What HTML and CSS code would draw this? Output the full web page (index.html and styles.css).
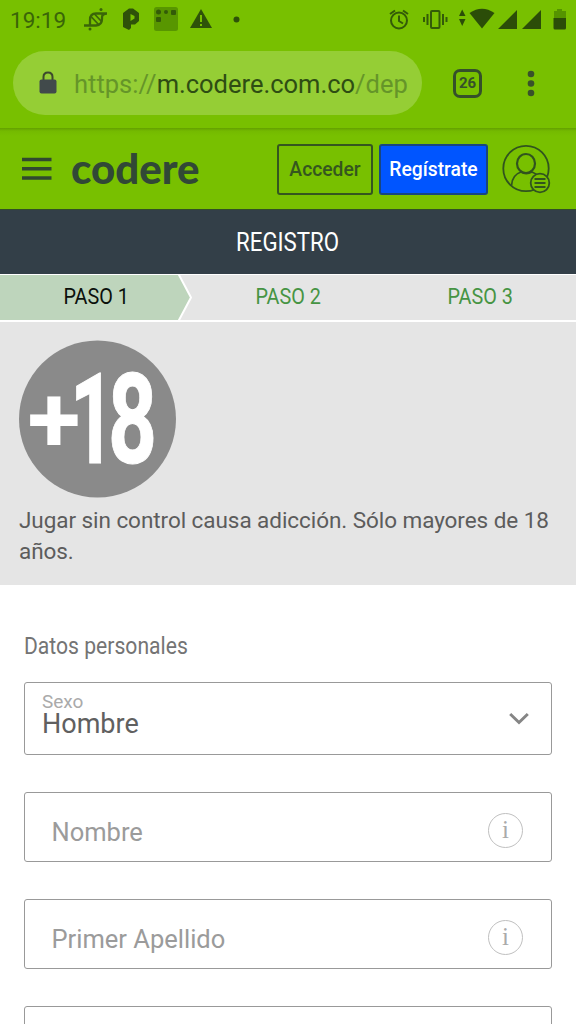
FILE: index.html
```html
<!DOCTYPE html>
<html lang="es">
<head>
<meta charset="utf-8">
<title>Registro</title>
<link rel="stylesheet" href="styles.css">
</head>
<body>
<div class="screen">
  <div class="status">
    <span class="clock">19:19</span>
    <svg class="status-left" width="164" height="40" viewBox="80 0 164 40">
      <g fill="none" stroke="#3a6508" stroke-width="2.300">
        <path d="M84 25.500H96Q102 25 102 19V17.500Q102 13.500 107 13.500M90 25V20Q90 13.500 96 13.500H107"/>
        <path d="M91.500 17L99 25M94.500 14L101.500 21.500" stroke-width="1.800"/>
      </g>
      <circle cx="101" cy="9.500" r="1.500" fill="#3a6508"/><circle cx="90" cy="29" r="1.500" fill="#3a6508"/>
      <path fill="#2e5209" fill-rule="evenodd" d="M123 13L129 8.500H133L139 13V21L135 24.500H131V28L129 30L123 27ZM130.500 14V21L134.500 18.500V16Z"/>
      <rect x="154" y="7" width="24" height="24" rx="2.500" fill="#589600"/>
      <g fill="#335b08"><circle cx="158.500" cy="12" r="2.500"/><circle cx="166" cy="12" r="2"/><rect x="171" y="10" width="5" height="5" rx="1"/><rect x="156" y="17" width="5" height="5" rx="1"/></g>
      <path fill="#2e5209" d="M201 9L212 28H190Z"/><path d="M201 15V22M201 24V26" stroke="#78c000" stroke-width="2"/>
      <circle cx="236.500" cy="19.500" r="3" fill="#2e5209"/>
    </svg>
    <svg class="status-right" width="188" height="40" viewBox="388 0 188 40">
      <g fill="none" stroke="#335b08" stroke-width="2">
        <circle cx="399" cy="20.500" r="8"/><path d="M399 15.500V21L403 23.500M390 14L395 10.500M408 14L403 10.500"/>
        <rect x="431" y="11" width="8.500" height="17" rx="1"/><path d="M427.500 14V25M424 17V22M443 14V25M446.500 17V22"/>
      </g>
      <g fill="#2b4d08">
        <path d="M459 16L462.200 9.500L465.500 16ZM459 19L462.200 26L465.500 19Z"/>
        <path d="M469.500 13Q482 4.500 494.500 13L482 28.500Z"/>
        <path d="M498 29L517 10V29ZM522 29L541 10V29Z"/>
        <path fill="#559400" d="M557 9H562V11H566V18H554V11H557Z"/><path d="M553.500 18H566V28Q566 29.500 564.500 29.500H555Q553.500 29.500 553.500 28Z"/>
      </g>
    </svg>
  </div>

  <div class="toolbar">
    <div class="address">
      <svg class="lock" width="18" height="24" viewBox="0 0 18 24"><path d="M4.500 9V6Q4.500 1.500 9 1.500T13.500 6V9" fill="none" stroke="#3d4a2d" stroke-width="2"/><rect x=".5" y="8.500" width="17" height="14" rx="2" fill="#414a4b"/></svg>
      <span class="url"><span class="dim">https://</span>m.codere.com.co<span class="dim">/dep</span></span>
    </div>
    <div class="tabs">26</div>
    <svg class="kebab" width="8" height="28" viewBox="0 0 8 28"><g fill="#39512a"><circle cx="4" cy="4" r="3.300"/><circle cx="4" cy="13.500" r="3.300"/><circle cx="4" cy="23" r="3.300"/></g></svg>
  </div>

  <header class="header">
    <svg class="menu" width="30" height="24" viewBox="0 0 30 24"><path d="M0 2.500H29.500M0 11.800H29.500M0 21H29.500" stroke="#31492f" stroke-width="3.600"/></svg>
    <svg class="logo" width="134" height="56" viewBox="0 0 134 56"><text x="1" y="39.500" textLength="128.500" lengthAdjust="spacingAndGlyphs">codere</text></svg>
    <button class="btn login">Acceder</button>
    <button class="btn signup">Regístrate</button>
    <svg class="avatar" width="50" height="50" viewBox="0 0 50 50">
      <g fill="none" stroke="#31541e" stroke-width="1.800">
        <circle cx="24" cy="24.500" r="22.700"/>
        <ellipse cx="24" cy="19.500" rx="9" ry="9.500" stroke-width="2.200"/>
        <path d="M9.500 41.500Q10 31 19 28Q24 31 30 28Q34 29.500 36.500 32.500"/>
        <circle cx="38" cy="39" r="9.300" fill="#78c000"/><path d="M32.500 35H43.500M32.500 39H43.500M32.500 43H43.500"/>
      </g>
    </svg>
  </header>

  <h1 class="title"><span class="narrow">REGISTRO</span></h1>
  <nav class="steps">
    <svg class="arrow" width="194" height="45" viewBox="0 0 194 45"><path d="M0 0H179L191 22.500L179 45H0Z" fill="#bed5bc"/><path d="M178.500 -1L191 22.500L178.500 46" fill="none" stroke="#fff" stroke-width="2"/></svg>
    <div class="step active"><span class="narrow">PASO 1</span></div>
    <div class="step"><span class="narrow">PASO 2</span></div>
    <div class="step"><span class="narrow">PASO 3</span></div>
  </nav>

  <section class="notice">
    <svg class="age" width="158" height="158" viewBox="0 0 158 158"><circle cx="78.500" cy="79" r="78.500" fill="#8a8a8a"/><text class="plus" x="8.500" y="111" textLength="53" lengthAdjust="spacingAndGlyphs">+</text><text class="digit" x="51" y="123" textLength="45" lengthAdjust="spacingAndGlyphs">1</text><text class="digit" x="89" y="123" textLength="49" lengthAdjust="spacingAndGlyphs">8</text></svg>
    <p class="warning">Jugar sin control causa adicción. Sólo mayores de 18 años.</p>
  </section>

  <main class="form">
    <h2 class="section"><span class="narrow">Datos personales</span></h2>
    <div class="field select">
      <div class="choice"><span class="label">Sexo</span><span class="value">Hombre</span></div>
      <svg width="20" height="14" viewBox="0 0 20 14"><path d="M1.200 2L10 10.500L18.800 2" fill="none" stroke="#858585" stroke-width="3"/></svg>
    </div>
    <div class="field"><span class="placeholder">Nombre</span><span class="info">i</span></div>
    <div class="field"><span class="placeholder">Primer Apellido</span><span class="info">i</span></div>
    <div class="field"></div>
  </main>
</div>
</body>
</html>
```
FILE: styles.css
```css
* { box-sizing: border-box; }
body { margin: 0; background: #fff; font-family: Roboto, sans-serif; }
svg { display: block; flex: none; }
.screen { width: 576px; height: 1024px; overflow: hidden; }
.status { height: 40px; display: flex; align-items: center; background: #78c000; }
.clock { width: 70px; padding-left: 10px; font-size: 22.5px; line-height: 40px; color: #3a6508; }
.status-left { margin-left: 10px; }
.status-right { margin-left: auto; }
.toolbar { height: 88px; display: flex; align-items: flex-start; padding: 11px 0 0 13px; background: #78c000; }
.address { width: 409px; height: 64px; border-radius: 32px; background: #95ce35; display: flex; align-items: center; padding-left: 26px; }
.lock { margin-top: -1px; }
.url { margin: 2px 0 0 17px; font-size: 25.5px; color: #2e4d13; white-space: nowrap; }
.dim { color: #659529; }
.tabs { width: 29px; height: 29px; margin: 18px 0 0 31px; border: 3px solid #35502a; border-radius: 7px; font-size: 15px; font-weight: 700; line-height: 23px; text-align: center; color: #35502a; }
.kebab { margin: 18.5px 0 0 45px; }
.header { height: 82px; display: flex; align-items: flex-start; padding: 16px 0 0 22px; background: linear-gradient(#63a000, #74ba00 3px, #78c000 8px); border-bottom: 1px solid #315025; }
.menu { margin-top: 13px; }
.logo { margin: 0 0 0 18px; }
.logo text { font: 900 41px Lato, sans-serif; fill: #314836; }
.btn { height: 51px; padding: 0; border: 2px solid #35561f; border-radius: 3px; font: 500 19.3px Roboto, sans-serif; }
.login { width: 96px; margin-left: 73px; background: none; color: #35561f; }
.signup { width: 109px; margin-left: 6px; background: #0055ff; color: #fff; border-color: #184680; }
.avatar { margin: 0 0 0 14px; }
.narrow { display: inline-block; transform: scaleX(.88); }
.title { height: 64px; margin: 0; background: #333f48; color: #fff; font-size: 25.3px; font-weight: 400; line-height: 65px; text-align: center; }
.steps { position: relative; height: 48px; display: grid; grid-template-columns: repeat(3, 1fr); background: #e5e5e5; border: solid #fff; border-width: 1.5px 0 2px; }
.arrow { position: absolute; left: 0; top: 0; }
.step { position: relative; text-align: center; font-size: 22.5px; line-height: 43px; color: #469443; }
.step.active { color: #0b100b; }
.notice { height: 263px; padding: 18px 19px 0; background: #e5e5e5; }
.warning { width: 538px; margin: 7px 0 0; font-size: 22.5px; letter-spacing: -0.06px; line-height: 31px; color: #5c5c5c; }
.plus { font: 700 93px Roboto, sans-serif; fill: #fff; }
.digit { font: 700 126px Roboto, sans-serif; fill: #fff; stroke: #fff; stroke-width: 1px; }
.form { padding: 45px 24px 0; }
.section { margin: 0; height: 52px; font-size: 24px; font-weight: 400; line-height: 32px; color: #747474; }
.section .narrow { transform-origin: left; }
.field { height: 70px; margin-bottom: 37px; border: 1.5px solid #999; border-radius: 3px; display: flex; align-items: center; justify-content: space-between; padding: 0 28px 0 26.5px; }
.select { height: 73px; padding: 0 22px 0 17px; }
.choice { display: flex; flex-direction: column; margin-top: -6px; }
.label { font-size: 19px; line-height: 18px; color: #aaa; }
.value { font-size: 27px; line-height: 27px; color: #606060; }
.placeholder { margin-top: 9px; font-size: 25.5px; color: #9b9b9b; }
.info { width: 35px; height: 35px; margin-top: 6px; border: 1.5px solid #c0c0c0; border-radius: 50%; font: 25px/32px "Liberation Serif", serif; text-align: center; color: #aaa; }
```
